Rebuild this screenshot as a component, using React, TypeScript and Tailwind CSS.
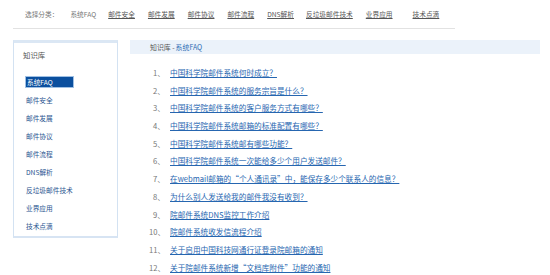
const navItems = [
  { label: "邮件安全", ml: "ml-[12px]" },
  { label: "邮件发展", ml: "ml-[13px]" },
  { label: "邮件协议", ml: "ml-[13px]" },
  { label: "邮件流程", ml: "ml-[13px]" },
  { label: "DNS解析", ml: "ml-[13px]" },
  { label: "反垃圾邮件技术", ml: "ml-[12px]" },
  { label: "业界应用", ml: "ml-[13px]" },
  { label: "技术点滴", ml: "ml-[20px]" },
];

const sideItems = ["邮件安全", "邮件发展", "邮件协议", "邮件流程", "DNS解析", "反垃圾邮件技术", "业界应用", "技术点滴"];

const questions = [
  "中国科学院邮件系统何时成立？",
  "中国科学院邮件系统的服务宗旨是什么？",
  "中国科学院邮件系统的客户服务方式有哪些？",
  "中国科学院邮件系统邮箱的标准配置有哪些？",
  "中国科学院邮件系统邮有哪些功能？",
  "中国科学院邮件系统一次能给多少个用户发送邮件？",
  "在webmail邮箱的“个人通讯录”中，能保存多少个联系人的信息？",
  "为什么别人发送给我的邮件我没有收到？",
  "院邮件系统DNS监控工作介绍",
  "院邮件系统收发信流程介绍",
  "关于启用中国科技网通行证登录院邮箱的通知",
  "关于院邮件系统新增“文档库附件”功能的通知",
];

export default function App() {
  return (
    <div className="w-[550px] h-[275px] overflow-hidden bg-white font-['Noto_Sans_CJK_SC','Noto_Sans',sans-serif]">
      {/* category bar */}
      <div className="ml-[13px] w-[442px] h-[29px] border-b border-[#e2e2e2] flex items-center pl-[12px] text-[6.7px] leading-none">
        <span className="text-[#777]">选择分类：</span>
        <span className="ml-[12px] text-[#777]">系统FAQ</span>
        {navItems.map((n) => (
          <a key={n.label} className={`${n.ml} text-[#555] underline underline-offset-1`}>
            {n.label}
          </a>
        ))}
      </div>

      <div className="flex mt-[11px]">
        {/* sidebar */}
        <div className="ml-[13px] w-[105px] h-[198px] border border-[#d3e2f2] border-t-[3px] border-t-[#dbe7f4] border-b-2 border-b-[#d7e4f3] flex flex-col">
          <div className="pl-[9px] pt-[6px] h-[33px] text-[7.4px] text-[#555]">知识库</div>
          <div className="pl-[11px] flex flex-col text-[6.7px] leading-none">
            <div className="h-[12px] w-[49px] bg-[#0b4f9e] text-white flex items-center pl-[1px] border border-[#9fc0e4]">系统FAQ</div>
            {sideItems.map((s) => (
              <div key={s} className="h-[18px] flex items-end pl-[1px] pb-[2px] text-[#2a5590]">
                {s}
              </div>
            ))}
          </div>
        </div>

        {/* main */}
        <div className="ml-[12px] w-[410px]">
          <div className="h-[14px] bg-[#ebf2fa] flex items-center pl-[20px] text-[6.9px] leading-none">
            <span className="text-[#555]">知识库 - </span>
            <span className="text-[#2e6db5] ml-[1px]">系统FAQ</span>
          </div>
          <ol className="mt-[10px] text-[7.65px] leading-none">
            {questions.map((q, i) => (
              <li key={i} className="h-[17.7px] flex items-center">
                <span className={`text-[#777] ${i < 9 ? "pl-[23px]" : "pl-[19px]"} w-[40px] shrink-0`}>
                  {i + 1}、
                </span>
                <a className="text-[#2666b0] underline underline-offset-1 whitespace-nowrap">{q}</a>
              </li>
            ))}
          </ol>
        </div>
      </div>
    </div>
  );
}
